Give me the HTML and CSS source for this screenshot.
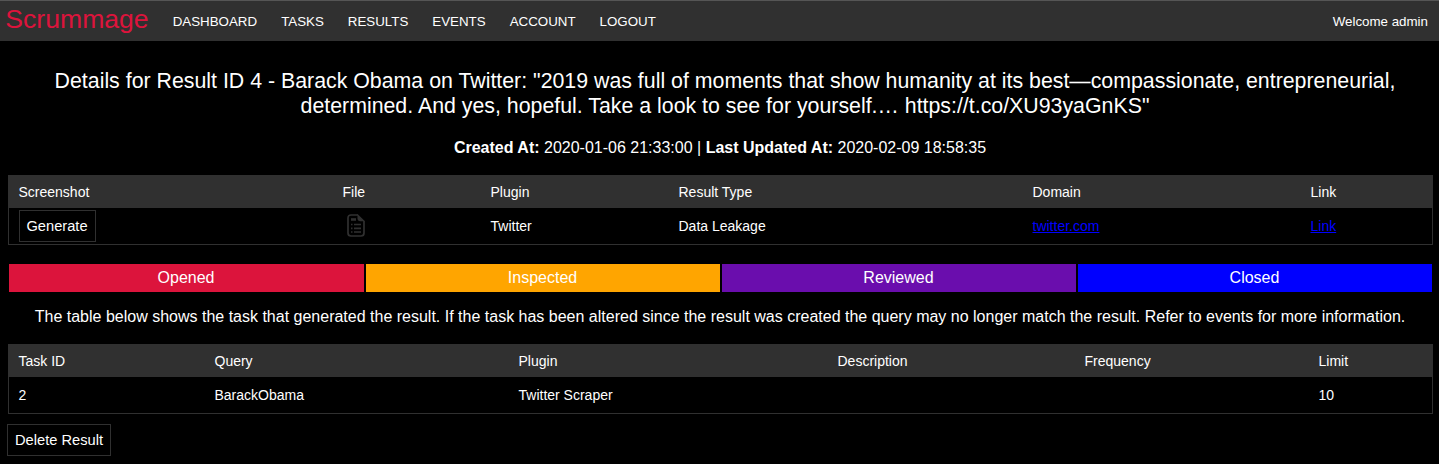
FILE: index.html
```html
<!DOCTYPE html>
<html lang="en">
<head>
<meta charset="utf-8">
<title>Scrummage</title>
<link rel="stylesheet" href="styles.css">
</head>
<body>
<header class="navbar">
  <a class="brand">Scrummage</a>
  <nav class="menu"><a>DASHBOARD</a><a>TASKS</a><a>RESULTS</a><a>EVENTS</a><a>ACCOUNT</a><a>LOGOUT</a></nav>
  <span class="welcome">Welcome admin</span>
</header>
<main class="content">
  <h1 class="title">Details for Result ID 4 - Barack Obama on Twitter: "2019 was full of moments that show humanity at its best—compassionate, entrepreneurial,<br>determined. And yes, hopeful. Take a look to see for yourself.… https://t.co/XU93yaGnKS"</h1>
  <p class="dates"><b>Created At:</b> 2020-01-06 21:33:00 | <b>Last Updated At:</b> 2020-02-09 18:58:35</p>
  <section class="table result">
    <div class="row head"><span>Screenshot</span><span>File</span><span>Plugin</span><span>Result Type</span><span>Domain</span><span>Link</span></div>
    <div class="row">
      <span><button class="button generate">Generate</button></span>
      <span><svg class="file-icon" width="18" height="23" viewBox="0 0 18 23" fill="none" stroke="#303030"><path d="M11 1H4Q1 1 1 4V19Q1 22 4 22H14Q17 22 17 19V7" stroke-width="1.7"/><path d="M10.5 0L18 7.3H13Q10.5 7 10.5 5Z" fill="#303030" stroke="none"/><path d="M4 5.5H9" stroke-width="2.6"/><path d="M4 10.5H5.5M7 10.5H14M4 14.3H5.5M7 14.3H14M4 18H5.5M7 18H14" stroke-width="1.7"/></svg></span>
      <span>Twitter</span><span>Data Leakage</span><span><a class="link" href="#">twitter.com</a></span><span><a class="link" href="#">Link</a></span>
    </div>
  </section>
  <section class="statuses">
    <div class="status opened">Opened</div><div class="status inspected">Inspected</div><div class="status reviewed">Reviewed</div><div class="status closed">Closed</div>
  </section>
  <p class="note">The table below shows the task that generated the result. If the task has been altered since the result was created the query may no longer match the result. Refer to events for more information.</p>
  <section class="table task">
    <div class="row head"><span>Task ID</span><span>Query</span><span>Plugin</span><span>Description</span><span>Frequency</span><span>Limit</span></div>
    <div class="row"><span>2</span><span>BarackObama</span><span>Twitter Scraper</span><span></span><span></span><span>10</span></div>
  </section>
  <button class="button delete">Delete Result</button>
</main>
</body>
</html>
```
FILE: styles.css
```css
* { box-sizing: border-box; }
body {
  margin: 0;
  background: #000;
  color: #fff;
  font: 16px/18px "Liberation Sans", Arial, sans-serif;
  overflow: hidden;
}
.navbar {
  display: flex;
  height: 41px;
  padding: 0 11px 0 5.3px;
  background: #303030;
  border-top: 1px solid #555;
  font-size: 13.333px;
  line-height: 42px;
}
.brand { width: 167.4px; color: #dc143c; font-size: 26.6px; line-height: 36px; }
.menu { display: flex; gap: 24px; }
.welcome { margin-left: auto; }
.content { padding: 28px 6px 0 8px; }
.title { margin: 0 0 20px; padding-left: 9px; font-size: 21.333px; font-weight: 400; line-height: 25px; text-align: center; white-space: nowrap; }
.dates { margin: 0 1px 18px 0; text-align: center; }
.table { border: 1px solid #303030; font-size: 14px; }
.row { display: grid; height: 36px; padding-left: 9.5px; align-items: center; }
.row > span { display: flex; align-items: center; }
.head { height: 32px; background: #303030; }
.result .row { grid-template-columns: 324px 148px 188px 354px 278px 1fr; }
.task .row { grid-template-columns: 196px 304px 319px 247px 234px 1fr; }
.button {
  height: 32px;
  padding: 0 7px 1px;
  border: 1px solid #303030;
  background: #000;
  color: #fff;
  font: 14.667px "Liberation Sans", Arial, sans-serif;
  white-space: nowrap;
}
.generate { width: 77px; margin-left: 0.5px; padding: 0 1px 1px 0; }
.file-icon { margin-left: 4.5px; margin-top: -1px; }
.link { color: #00f; }
.statuses { display: grid; grid-template-columns: 355px 354px 354px 354px; gap: 2px; margin: 19px 1px 16px; }
.status { height: 28px; padding-right: 1px; line-height: 28px; text-align: center; }
.opened { background: #dc143c; }
.inspected { background: #ffa500; }
.reviewed { background: #6a0dad; }
.closed { background: #00f; }
.note { margin: 0 1px 18px 0; text-align: center; white-space: nowrap; }
.delete { display: block; width: 104px; margin: 10px 0 0 -1px; padding: 0 0 1px; }
```
